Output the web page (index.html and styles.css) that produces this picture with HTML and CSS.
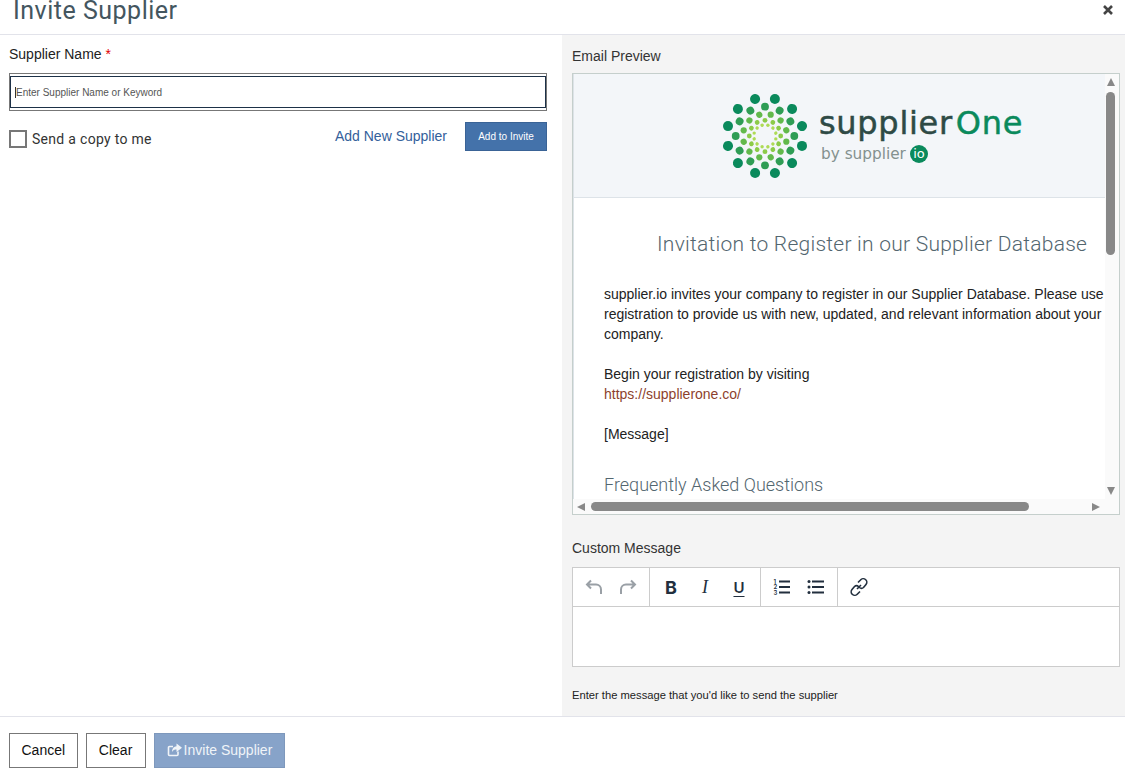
FILE: index.html
```html
<!DOCTYPE html>
<html lang="en">
  <head>
    <meta charset="utf-8" />
    <title>Invite Supplier</title>
    <link rel="stylesheet" href="styles.css">
  </head>
  <body>
    <div class="modal">
      <div class="modal-header">
        <div class="modal-title">Invite Supplier</div>
        <svg class="close-icon" width="12" height="12" viewBox="0 0 12 12">
          <path d="M2 2L10 10M10 2L2 10" />
        </svg>
      </div>

      <div class="modal-body">
        <div class="left-col">
          <div class="field-label">Supplier Name <span class="required">*</span></div>
          <div class="name-input">
            <div class="name-inner">
              <span class="caret"></span>
              <input class="name-field" type="text" placeholder="Enter Supplier Name or Keyword">
            </div>
          </div>
          <div class="invite-row">
            <label class="copy-check">
              <span class="check-box"></span>
              Send a copy to me
            </label>
            <a class="add-link">Add New Supplier</a>
            <button class="add-btn">Add to Invite</button>
          </div>
        </div>

        <div class="right-col">
          <div class="preview-label">Email Preview</div>
          <div class="preview">
            <div class="preview-view">
              <div class="mail-head">
                <svg class="logo-mark" width="84" height="84" viewBox="-42 -42 84 84">
                  <defs>
                    <g id="spoke">
                      <circle class="dot-1" cx="9.9" cy="-37" r="5" />
                      <circle class="dot-2" cx="0" cy="-29.3" r="3.9" />
                      <circle class="dot-3" cx="5.7" cy="-21.3" r="3.1" />
                      <circle class="dot-4" cx="0" cy="-15.7" r="2.4" />
                      <circle class="dot-5" cx="2.9" cy="-10.8" r="1.7" />
                    </g>
                  </defs>
                  <use href="#spoke" />
                  <use href="#spoke" transform="rotate(30)" />
                  <use href="#spoke" transform="rotate(60)" />
                  <use href="#spoke" transform="rotate(90)" />
                  <use href="#spoke" transform="rotate(120)" />
                  <use href="#spoke" transform="rotate(150)" />
                  <use href="#spoke" transform="rotate(180)" />
                  <use href="#spoke" transform="rotate(210)" />
                  <use href="#spoke" transform="rotate(240)" />
                  <use href="#spoke" transform="rotate(270)" />
                  <use href="#spoke" transform="rotate(300)" />
                  <use href="#spoke" transform="rotate(330)" />
                </svg>
                <div class="logo-text">
                  <div class="logo-name">supplier<span class="logo-one">One</span></div>
                  <div class="logo-by">by supplier<span class="logo-io">io</span></div>
                </div>
              </div>
              <div class="mail-body">
                <h1 class="mail-title">Invitation to Register in our Supplier Database</h1>
                <p class="mail-text">supplier.io invites your company to register in our Supplier Database. Please use registration to provide us with new, updated, and relevant information about your company.</p>
                <p class="mail-text">Begin your registration by visiting<br><a class="mail-link">https://supplierone.co/</a></p>
                <p class="mail-text">[Message]</p>
                <h2 class="mail-faq">Frequently Asked Questions</h2>
              </div>
            </div>
            <div class="scroll-y">
              <span class="arrow arrow-up"></span>
              <span class="thumb-y"></span>
              <span class="arrow arrow-down"></span>
            </div>
            <div class="scroll-x">
              <span class="arrow arrow-left"></span>
              <span class="thumb-x"></span>
              <span class="arrow arrow-right"></span>
            </div>
          </div>

          <div class="message-label">Custom Message</div>
          <div class="editor">
            <div class="toolbar">
              <div class="tool-group">
                <span class="tool tool-off">
                  <svg width="20" height="20" viewBox="0 0 20 20"><path d="M7 3.5L3 7.5L7 11.5M3 7.5H12A5 5 0 0 1 17 12.5V17" /></svg>
                </span>
                <span class="tool tool-off">
                  <svg width="20" height="20" viewBox="0 0 20 20"><path d="M13 3.5L17 7.5L13 11.5M17 7.5H8A5 5 0 0 0 3 12.5V17" /></svg>
                </span>
              </div>
              <div class="tool-group">
                <span class="tool tool-bold">B</span>
                <span class="tool tool-italic">I</span>
                <span class="tool tool-under">U</span>
              </div>
              <div class="tool-group">
                <span class="tool">
                  <span class="num-list"><span>1</span><span>2</span><span>3</span></span>
                  <svg width="11" height="18" viewBox="0 0 11 18"><path d="M0 3.5H11M0 9H11M0 14.5H11" /></svg>
                </span>
                <span class="tool">
                  <svg width="18" height="18" viewBox="0 0 18 18"><path d="M5 3.5H17M5 9H17M5 14.5H17" /><circle class="tool-dot" cx="2" cy="3.5" r="1.5" /><circle class="tool-dot" cx="2" cy="9" r="1.5" /><circle class="tool-dot" cx="2" cy="14.5" r="1.5" /></svg>
                </span>
              </div>
              <div class="tool-group">
                <span class="tool tool-link">
                  <svg width="20" height="20" viewBox="0 0 20 20"><path d="M8 12L12 8M9 5.500L11.500 3A3 3 0 0 1 17 7.500L14.500 10.500A3 3 0 0 1 10.500 10.500M11 14.500L8.500 17A3 3 0 0 1 3 12.500L5.500 9.500A3 3 0 0 1 9.500 9.500" /></svg>
                </span>
              </div>
            </div>
            <div class="editor-area"></div>
          </div>
          <div class="editor-hint">Enter the message that you'd like to send the supplier</div>
        </div>
      </div>

      <div class="modal-footer">
        <button class="btn">Cancel</button>
        <button class="btn">Clear</button>
        <button class="btn btn-invite">
          <svg width="15" height="14" viewBox="0 0 15 14">
            <path class="share-box" d="M11 8.500V11.500A1 1 0 0 1 10 12.500H2.500A1 1 0 0 1 1.500 11.500V4.500A1 1 0 0 1 2.500 3.500H6" />
            <path class="share-arrow" d="M9.500 0.500L15 4.800L9.500 9V6.500C7.500 6.500 6 7 5 9C5 5.500 7 3.300 9.500 3.200Z" />
          </svg>
          Invite Supplier
        </button>
      </div>
    </div>
  </body>
</html>
```

FILE: styles.css
```css
html,
body {
  margin: 0;
  height: 100%;
  overflow: hidden;
}

body {
  font-family: "Liberation Sans", Arial, sans-serif;
  font-size: 14px;
  color: #222;
  background: white;
}

.modal {
  display: flex;
  flex-direction: column;
  height: 782px;
}

.modal-header {
  display: flex;
  justify-content: space-between;
  height: 34px;
  padding: 0 11px 0 13px;
  border-bottom: 1px solid #e2e3ea;
  flex: none;
}

.modal-title {
  font-family: Roboto, sans-serif;
  font-size: 25px;
  line-height: 22px;
  letter-spacing: 0.5px;
  color: #44565f;
}

.close-icon {
  margin-top: 4px;
}

.close-icon path {
  fill: none;
  stroke: #444;
  stroke-width: 2.6;
}

.modal-body {
  display: flex;
  flex: 1;
  min-height: 0;
}

.left-col {
  width: 538px;
  padding: 9px 15px 0 9px;
}

.field-label {
  line-height: 20px;
  color: #222;
}

.required {
  color: #e00000;
}

.name-input {
  margin-top: 9px;
  padding: 2px 0;
  border: 1px solid #777;
}

.name-inner {
  display: flex;
  align-items: center;
  box-sizing: border-box;
  height: 32px;
  padding-left: 4px;
  border: 1px solid #1d3148;
}

.caret {
  width: 1px;
  height: 11px;
  background: #333;
}

.name-field {
  flex: 1;
  border: none;
  outline: none;
  padding: 0;
  font-family: "Liberation Sans", Arial, sans-serif;
  font-size: 10px;
  background: transparent;
}

.name-field::placeholder {
  color: #555;
  opacity: 1;
}

.invite-row {
  display: flex;
  align-items: flex-start;
  margin-top: 11px;
}

.copy-check {
  display: flex;
  align-items: center;
  gap: 5px;
  flex: 1;
  margin-top: 8px;
  font-family: Roboto, sans-serif;
  color: #333;
  letter-spacing: 0.3px;
}

.check-box {
  width: 14px;
  height: 14px;
  border: 2px solid #777;
  background: white;
}

.add-link {
  margin: 5px 18px 0 0;
  line-height: 18px;
  color: #33609b;
}

.add-btn {
  width: 82px;
  height: 29px;
  padding: 0;
  border: 1px solid #3a6396;
  border-radius: 0;
  background: #4472aa;
  color: white;
  font-family: "Liberation Sans", Arial, sans-serif;
  font-size: 10px;
}

.right-col {
  flex: 1;
  padding: 11px 5px 0 10px;
  background: #f4f4f4;
}

.preview-label,
.message-label {
  line-height: 20px;
  color: #333;
}

.preview-label {
  margin-bottom: 7px;
}

.message-label {
  margin: 23px 0 9px;
}

.preview {
  display: grid;
  grid-template-columns: 1fr 14px;
  grid-template-rows: 1fr 15px;
  height: 440px;
  border: 1px solid #c5cfcc;
  background: white;
}

.preview-view {
  overflow: hidden;
  min-width: 0;
  border-left: 1px solid #dde3e8;
}

.mail-head {
  display: flex;
  align-items: center;
  gap: 12px;
  height: 123px;
  padding-left: 149px;
  background: #f3f6f9;
  border-bottom: 1px solid #dde3e8;
}

.logo-mark {
  flex: none;
}

.dot-1 { fill: #0a8a5c; }
.dot-2 { fill: #2f9d55; }
.dot-3 { fill: #62b94b; }
.dot-4 { fill: #8ccb48; }
.dot-5 { fill: #aedb55; }

.logo-text {
  display: flex;
  flex-direction: column;
  gap: 8px;
}

.logo-name {
  font-family: "DejaVu Sans", sans-serif;
  font-size: 32px;
  line-height: 28px;
  letter-spacing: 0.7px;
  -webkit-text-stroke: 0.5px;
  color: #2e4a45;
}

.logo-one {
  margin-left: 3px;
  color: #0a8a5c;
}

.logo-by {
  display: flex;
  align-items: center;
  font-family: "DejaVu Sans", sans-serif;
  font-size: 15.3px;
  line-height: 18px;
  color: #84918f;
  padding-left: 2px;
}

.logo-io {
  width: 18px;
  height: 18px;
  margin-left: 4px;
  border-radius: 50%;
  background: #0a8a5c;
  color: white;
  font-size: 13px;
  text-align: center;
}

.mail-body {
  width: 503px;
  padding: 32px 0 0 30px;
}

.mail-title {
  margin: 0 0 26px 53px;
  font-family: Roboto, sans-serif;
  font-size: 21px;
  font-weight: 300;
  line-height: 28px;
  letter-spacing: 0.25px;
  white-space: nowrap;
  color: #53666f;
}

.mail-text {
  margin: 0 0 20px;
  line-height: 20px;
  color: #222;
}

.mail-link {
  color: #8d3f2d;
}

.mail-faq {
  margin: 31px 0 0;
  font-family: Roboto, sans-serif;
  font-size: 18px;
  font-weight: 300;
  line-height: 20px;
  white-space: nowrap;
  color: #53666f;
}

.scroll-y {
  display: flex;
  flex-direction: column;
  align-items: center;
  background: #fafafa;
  padding: 4px 3px 0 0;
  grid-row: 1;
  grid-column: 2;
}

.scroll-x {
  display: flex;
  align-items: center;
  grid-row: 2;
  grid-column: 1 / 3;
  padding-left: 4px;
  background: #fafafa;
}

.arrow {
  width: 0;
  height: 0;
  flex: none;
  border: 4.5px solid transparent;
}

.arrow-up {
  border-top: none;
  border-bottom: 8px solid #888;
}

.arrow-down {
  margin-top: 232px;
  border-bottom: none;
  border-top: 8px solid #888;
}

.arrow-left {
  border-left: none;
  border-right: 8px solid #888;
}

.arrow-right {
  margin-left: 63px;
  border-right: none;
  border-left: 8px solid #888;
}

.thumb-y {
  width: 9px;
  height: 163px;
  margin-top: 6px;
  border-radius: 5px;
  background: #888;
}

.thumb-x {
  width: 438px;
  height: 9px;
  margin-left: 6px;
  border-radius: 5px;
  background: #888;
}

.editor {
  height: 98px;
  border: 1px solid #ccc;
  background: white;
}

.toolbar {
  display: flex;
  height: 38px;
  border-bottom: 1px solid #ccc;
}

.tool-group {
  display: flex;
  padding: 0 4px;
  border-right: 1px solid #ccc;
}

.tool-group:last-child {
  border-right: none;
}

.tool {
  display: flex;
  align-items: center;
  justify-content: center;
  width: 34px;
  color: #222f3e;
}

.tool svg path {
  fill: none;
  stroke: #222f3e;
  stroke-width: 2;
}

.tool-off svg path {
  stroke: #9aa0a6;
}

.tool-link svg path {
  stroke-width: 1.6;
}

.tool-dot {
  fill: #222f3e;
}

.tool-bold {
  font-family: Inter, sans-serif;
  font-size: 18px;
  font-weight: 700;
}

.tool-italic {
  font-family: "Liberation Serif", serif;
  font-size: 18px;
  font-style: italic;
}

.tool-under {
  font-family: Inter, sans-serif;
  font-size: 15px;
  font-weight: 600;
  text-decoration: underline;
  text-underline-offset: 3px;
}

.num-list {
  display: flex;
  flex-direction: column;
  font-family: Inter, sans-serif;
  font-size: 6px;
  font-weight: 600;
  line-height: 5.5px;
  margin-right: 2px;
}

.editor-area {
  height: 59px;
}

.editor-hint {
  margin-top: 20px;
  font-size: 11.2px;
  line-height: 16px;
  color: #222;
}

.modal-footer {
  display: flex;
  gap: 8px;
  flex: none;
  height: 49px;
  padding: 16px 0 0 9px;
  border-top: 1px solid #e2e3ea;
}

.btn {
  min-width: 60px;
  height: 35px;
  padding: 0 11.5px 2px;
  border: 1px solid #777;
  border-radius: 0;
  background: white;
  color: #111;
  font-family: "Liberation Sans", Arial, sans-serif;
  font-size: 14px;
}

.btn-invite {
  display: flex;
  align-items: center;
  gap: 2px;
  padding: 0 12px 2px;
  border-color: #7e98bc;
  background: #87a3c9;
  color: #f0f4f8;
}

.share-box {
  fill: none;
  stroke: #f0f4f8;
  stroke-width: 1.6;
}

.share-arrow {
  fill: #f0f4f8;
}
```
